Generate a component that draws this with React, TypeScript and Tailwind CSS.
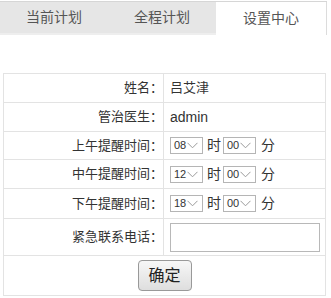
import { ReactNode } from 'react'

const font = { fontFamily: '"Liberation Sans", "Noto Sans CJK SC", sans-serif' }

const tabs = ['当前计划', '全程计划', '设置中心']

function TimeSelect({ value }: { value: string }) {
  return (
    <span className="inline-flex items-center w-[33px] h-[17px] border border-[#b5b5b5] bg-white pl-[3px] text-[11px] leading-none text-[#333]">
      <span>{value}</span>
      <svg width="11" height="7" viewBox="0 0 11 7" className="ml-[1px]">
        <path d="M0.5 0.8 L5.5 5.8 L10.5 0.8" fill="none" stroke="#9a9a9a" strokeWidth="1" />
      </svg>
    </span>
  )
}

function TimeRow({ hour }: { hour: string }) {
  return (
    <div className="flex items-center">
      <TimeSelect value={hour} />
      <span className="ml-[4px] mr-[2px] text-[14px]">时</span>
      <TimeSelect value="00" />
      <span className="ml-[5px] text-[14px]">分</span>
    </div>
  )
}

function Row({ label, h, children }: { label: string; h: string; children: ReactNode }) {
  return (
    <tr className={h}>
      <td className="border border-[#e3e3e3] text-right pr-0 w-[160px]">{label}</td>
      <td className="border border-[#e3e3e3] pl-[6px]">{children}</td>
    </tr>
  )
}

export default function App() {
  return (
    <div className="w-[331px] h-[298px] bg-white text-[#333] text-[13px]" style={font}>
      <div className="flex pt-[1px]">
        <div className="flex border-t border-[#d6d6d6]">
          {tabs.map((t, i) =>
            i === 2 ? (
              <div key={t} className="w-[111px] h-[33px] flex items-center justify-center bg-white text-[14px] text-[#555] border-r border-[#dcdcdc]">
                {t}
              </div>
            ) : (
              <div key={t} className="w-[108px] h-[33px] flex items-center justify-center bg-[#e6e6e6] text-[14px] text-[#555] border-b-2 border-[#eeeeee]">
                {t}
              </div>
            )
          )}
        </div>
      </div>

      <table className="mt-[38px] ml-[3px] w-[323px] border-collapse">
        <tbody>
          <Row label="姓名：" h="h-[29px]">吕艾津</Row>
          <Row label="管治医生：" h="h-[29px]">
            <span className="text-[14px]">admin</span>
          </Row>
          <Row label="上午提醒时间：" h="h-[28px]">
            <TimeRow hour="08" />
          </Row>
          <Row label="中午提醒时间：" h="h-[29px]">
            <TimeRow hour="12" />
          </Row>
          <Row label="下午提醒时间：" h="h-[30px]">
            <TimeRow hour="18" />
          </Row>
          <Row label="紧急联系电话：" h="h-[37px]">
            <input className="w-[150px] h-[29px] border border-[#b8b8b8] bg-white outline-none" />
          </Row>
          <tr className="h-[40px]">
            <td colSpan={2} className="border border-[#e3e3e3] text-center">
              <button className="w-[54px] h-[31px] rounded-[4px] border border-[#999] bg-gradient-to-b from-[#f7f7f7] to-[#dedede] text-[16px] text-[#222]">
                确定
              </button>
            </td>
          </tr>
        </tbody>
      </table>
    </div>
  )
}
